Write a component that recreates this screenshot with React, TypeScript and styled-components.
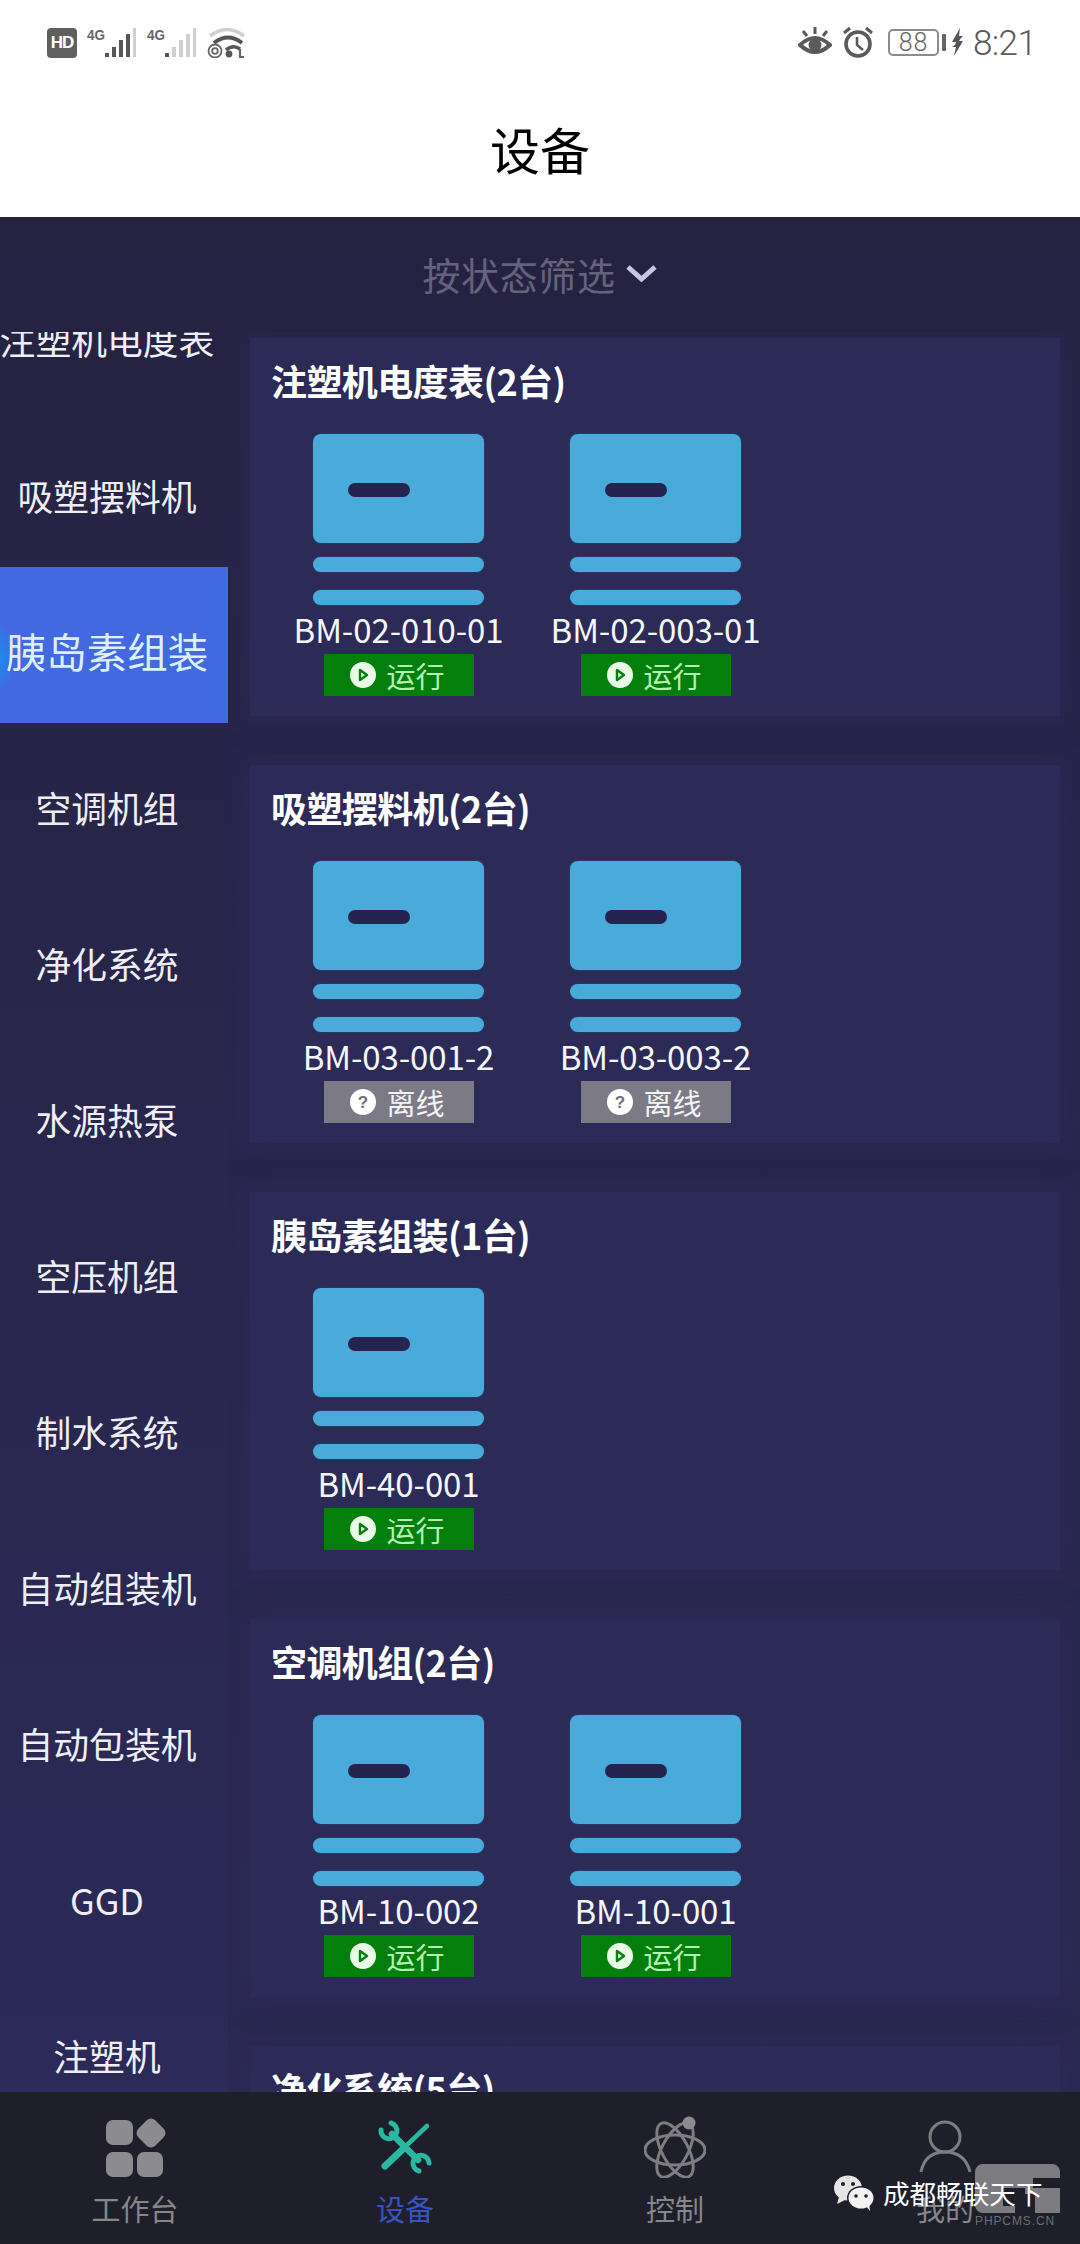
import React from "react";
import styled, { createGlobalStyle } from "styled-components";

const Global = createGlobalStyle`
  html, body { margin: 0; padding: 0; background: #fff; }
  * { box-sizing: border-box; }
`;

const CJK = `"Noto Sans CJK SC", "Noto Sans", sans-serif`;

const Page = styled.div`
  width: 1080px;
  height: 2244px;
  display: flex;
  flex-direction: column;
  overflow: hidden;
  font-family: ${CJK};
`;
const Header = styled.header`
  height: 217px;
  flex: none;
  background: #fff;
  display: flex;
  flex-direction: column;
`;
const StatusBar = styled.div`
  height: 80px;
  padding: 27px 47px 0 47px;
  display: flex;
  justify-content: space-between;
  align-items: flex-start;
`;
const StatusGroup = styled.div`
  display: flex;
  align-items: flex-start;
  gap: 10px;
`;
const HdBadge = styled.div`
  width: 30px;
  height: 30px;
  margin-top: 1px;
  border-radius: 4px;
  background: #5f5f5f;
  color: #fff;
  font: 700 17px/30px "Liberation Sans", sans-serif;
  text-align: center;
  letter-spacing: -1px;
`;
const Battery = styled.div`
  width: 51px;
  height: 27px;
  margin: 2px 0 0 4px;
  border: 2px solid #8c8c8c;
  border-radius: 5px;
  color: #666;
  font: 300 25px/23px Roboto, sans-serif;
  text-align: center;
  letter-spacing: 1px;
`;
const BatteryTip = styled.div`
  width: 4px;
  height: 17px;
  margin: 7px 0 0 -7px;
  background: #666;
  border-radius: 1px;
`;
const Clock = styled.div`
  font: 300 35px/30px Roboto, sans-serif;
  color: #5a5a5a;
  margin: 2px 0 0 -1px;
  letter-spacing: -0.6px;
  width: 60px;
  white-space: nowrap;
`;
const TitleBar = styled.h1`
  flex: 1;
  margin: 0;
  padding-bottom: 2px;
  display: flex;
  align-items: center;
  justify-content: center;
  font-size: 50px;
  font-weight: 400;
  color: #000;
  line-height: 1;
`;

const Body = styled.main`
  flex: 1;
  min-height: 0;
  display: flex;
  flex-direction: column;
  background: linear-gradient(#252240, #27254b 30%, #2a2952);
`;
const FilterBar = styled.div`
  height: 115px;
  flex: none;
  padding-bottom: 3px;
  display: flex;
  align-items: center;
  justify-content: center;
  gap: 9px;
  color: #64637a;
  font-size: 38px;
  letter-spacing: 0.6px;
`;
const Columns = styled.div`
  flex: 1;
  min-height: 0;
  display: flex;
  overflow: hidden;
`;
const Sidebar = styled.nav`
  width: 228px;
  flex: none;
  background: linear-gradient(#262342, #2b2a58);
  overflow: hidden;
`;
const SideList = styled.div`
  margin-top: -77px;
  display: flex;
  flex-direction: column;
`;
const SideItem = styled.div<{ $active?: boolean }>`
  height: 156px;
  flex: none;
  display: flex;
  align-items: center;
  justify-content: center;
  padding: 11px 14px 0 0;
  white-space: nowrap;
  color: ${(p) => (p.$active ? "#dcf0ff" : "#eeeef4")};
  font-size: ${(p) => (p.$active ? "40.5px" : "35.8px")};
  background: ${(p) =>
    p.$active
      ? "radial-gradient(ellipse 14px 36px at 0 58%, #1c8cf0, transparent), #4269e0"
      : "transparent"};
`;
const Main = styled.section`
  flex: 1;
  min-width: 0;
  overflow: hidden;
  padding: 6px 20px 0 22px;
`;
const Card = styled.article`
  height: 378px;
  margin-bottom: 49px;
  padding: 22px 0 0 20px;
  background: #2c2a56;
  box-shadow: 0 0 22px 6px rgba(44, 42, 86, 0.7);
`;
const CardTitle = styled.h2`
  margin: 0 0 0 1px;
  color: #fff;
  font-size: 36px;
  line-height: 40px;
  font-weight: 700;
  letter-spacing: -0.6px;
`;
const DeviceRow = styled.div`
  display: flex;
  margin-top: 34px;
`;
const Device = styled.div`
  width: 257px;
  display: flex;
  flex-direction: column;
  align-items: center;
`;
const Screen = styled.div`
  width: 171px;
  height: 109px;
  display: flex;
  padding: 49px 0 0 35px;
  border-radius: 8px;
  background: #4aabda;
  box-shadow: 0 0 3px #1f4c85;
`;
const Slot = styled.div`
  width: 62px;
  height: 14px;
  border-radius: 7px;
  background: #252451;
`;
const Rail = styled.div`
  width: 171px;
  height: 15px;
  margin-top: 14px;
  border-radius: 8px;
  background: #4aabda;
  box-shadow: 0 0 3px #1f4c85;
  & + & {
    margin-top: 18px;
  }
`;
const DeviceName = styled.div`
  margin-top: 4px;
  height: 41px;
  color: #f4f6fa;
  font-size: 33px;
  line-height: 40px;
  letter-spacing: -0.1px;
  white-space: nowrap;
`;
const Badge = styled.div<{ $online: boolean }>`
  width: 150px;
  height: 42px;
  margin-top: 4px;
  display: flex;
  align-items: center;
  justify-content: center;
  gap: 10px;
  padding-right: 2px;
  font-size: 29px;
  line-height: 42px;
  background: ${(p) => (p.$online ? "#047f0c" : "#7b7a86")};
  color: ${(p) => (p.$online ? "#b4f2b4" : "#f4f4f4")};
`;
const TabBar = styled.footer`
  position: relative;
  height: 152px;
  flex: none;
  background: #1e1f2a;
  display: grid;
  grid-template-columns: repeat(4, 1fr);
`;
const Tab = styled.div`
  display: flex;
  flex-direction: column;
  align-items: center;
  padding-top: 24px;
`;
const TabLabel = styled.span<{ $active?: boolean }>`
  margin-top: 11px;
  font-size: 29px;
  line-height: 38px;
  color: ${(p) => (p.$active ? "#3756bd" : "#87878a")};
`;
const Watermark = styled.div`
  position: absolute;
  left: 833px;
  top: 83px;
  display: flex;
  align-items: center;
  gap: 8px;
  color: #fff;
  font-size: 26.6px;
  line-height: 36px;
  white-space: nowrap;
`;
const WatermarkLogo = styled.svg`
  position: absolute;
  left: 975px;
  top: 72px;
`;
const WatermarkSite = styled.div`
  position: absolute;
  left: 975px;
  top: 122px;
  color: #6e6e72;
  font: 400 12px/14px "Liberation Sans", sans-serif;
  letter-spacing: 0.9px;
`;
const BackLayer = styled.svg`
  display: block;
  flex: none;
`;

const Signal = ({ bars }: { bars: number }) => (
  <BackLayer width="50" height="32" viewBox="0 0 50 32">
    <text x="0" y="13" fontFamily="'Liberation Sans', sans-serif" fontSize="14" fontWeight="700" fill="#666" textLength="18" lengthAdjust="spacingAndGlyphs">
      4G
    </text>
    {[
      [18, 26, 4],
      [25, 20, 4],
      [32, 13, 4],
      [39, 7, 4],
      [46, 1, 3],
    ].map(([x, y, w], i) => (
      <rect key={x} x={x} y={y} width={w} height={30 - y} fill={i < bars ? "#555" : "#cfcfcf"} />
    ))}
  </BackLayer>
);

const Wifi = () => (
  <BackLayer width="40" height="31" viewBox="0 0 40 31" fill="none">
    <path d="M3 9Q20-4 37 9" stroke="#cfcfcf" strokeWidth="3.5" />
    <path d="M7 16Q21 5 35 16" stroke="#555" strokeWidth="4" />
    <path d="M19 23Q26 17 33 22" stroke="#555" strokeWidth="3.5" />
    <circle cx="8" cy="24" r="6.5" stroke="#666" strokeWidth="1.8" />
    <circle cx="8" cy="24" r="2.8" stroke="#666" strokeWidth="1.8" />
    <circle cx="22" cy="27" r="3.4" fill="#555" />
    <path d="M33 22v8h4" stroke="#666" strokeWidth="2.2" />
  </BackLayer>
);

const Eye = () => (
  <BackLayer width="34" height="30" viewBox="0 0 34 30" fill="none">
    <path d="M2 18Q17 4 32 18Q17 32 2 18Z" stroke="#5a5a5a" strokeWidth="4" />
    <circle cx="17" cy="18" r="6.5" fill="#5a5a5a" />
    <path d="M17 0v7M5 4l4 5M29 4l-4 5" stroke="#5a5a5a" strokeWidth="3" />
  </BackLayer>
);

const Alarm = () => (
  <BackLayer width="32" height="31" viewBox="0 0 32 31" fill="none">
    <circle cx="16" cy="17" r="12" stroke="#5a5a5a" strokeWidth="3.6" />
    <path d="M15 10v8l6 5" stroke="#5a5a5a" strokeWidth="2.6" />
    <path d="M2 6l6-5M30 6l-6-5" stroke="#5a5a5a" strokeWidth="3.2" />
  </BackLayer>
);

const Bolt = () => (
  <BackLayer width="13" height="30" viewBox="0 0 13 30" style={{ marginLeft: -5 }}>
    <path d="M9 1L1 15h4l-1 3 -3 2h4L3 29 12 14H8l2-3 2-2H8z" fill="#555" />
  </BackLayer>
);

const Chevron = () => (
  <svg width="33" height="18" viewBox="0 0 33 18" fill="none">
    <path d="M3 3l13.5 12L30 3" stroke="#c9c6e0" strokeWidth="5" />
  </svg>
);

const StatusIcon = ({ online }: { online: boolean }) => (
  <svg width="26" height="26" viewBox="0 0 26 26">
    <circle cx="13" cy="13" r="13" fill={online ? "#eafbe8" : "#fff"} />
    {online ? (
      <path d="M10 8l7 5-7 5z" fill="none" stroke="#047f0c" strokeWidth="2.4" strokeLinejoin="round" />
    ) : (
      <text x="13" y="19" textAnchor="middle" fontFamily="'Liberation Sans', sans-serif" fontWeight="700" fontSize="17" fill="#6e6d78">
        ?
      </text>
    )}
  </svg>
);

const GridIcon = () => (
  <BackLayer width="62" height="62" viewBox="0 0 62 62" fill="#8c8c90">
    <rect x="2" y="4" width="27" height="25" rx="7" />
    <rect x="2" y="36" width="27" height="25" rx="7" />
    <rect x="33" y="36" width="26" height="25" rx="7" />
    <rect x="35" y="5" width="24" height="24" rx="6" transform="rotate(45 47 17)" />
  </BackLayer>
);

const ToolsIcon = () => (
  <BackLayer width="62" height="62" viewBox="0 0 62 62" fill="none" stroke="#2bb8a2" strokeLinecap="round">
    <g transform="translate(6 6)">
      <path d="M47 4L28 22" strokeWidth="4.5" />
      <path d="M23 27L5 44" strokeWidth="7" />
      <path d="M12 12L38 38" strokeWidth="6.5" />
      <path d="M1 8A8 8 0 1 0 11 1" strokeWidth="5" />
      <path d="M49 41A8 8 0 1 0 39 49" strokeWidth="5" />
    </g>
  </BackLayer>
);

const AtomIcon = () => (
  <BackLayer width="62" height="62" viewBox="0 0 62 62" fill="none" stroke="#7e7e82" strokeWidth="3">
    <ellipse cx="31" cy="34" rx="30" ry="15" />
    <ellipse cx="31" cy="34" rx="30" ry="13" transform="rotate(62 31 34)" />
    <ellipse cx="31" cy="34" rx="30" ry="13" transform="rotate(-62 31 34)" />
    <circle cx="45" cy="7" r="6.5" fill="#8c8c90" stroke="none" />
  </BackLayer>
);

const UserIcon = () => (
  <BackLayer width="62" height="62" viewBox="0 0 62 62" fill="none" stroke="#7e7e82" strokeWidth="3">
    <circle cx="31" cy="21" r="15" />
    <path d="M7 56Q11 36 31 36Q51 36 56 56" />
  </BackLayer>
);

const WeChat = () => (
  <svg width="42" height="36" viewBox="0 0 42 36">
    <ellipse cx="15" cy="13" rx="14" ry="12.5" fill="#e6e6e6" />
    <path d="M6 22l-2 7 8-4z" fill="#e6e6e6" />
    <circle cx="10" cy="9" r="2" fill="#1e1f2a" />
    <circle cx="20" cy="9" r="2" fill="#1e1f2a" />
    <ellipse cx="28" cy="23" rx="14" ry="12" fill="#1e1f2a" />
    <ellipse cx="28" cy="23" rx="12.5" ry="10.5" fill="#f2f2f2" />
    <path d="M33 31l4 5-1-8z" fill="#f2f2f2" />
    <circle cx="23" cy="21" r="1.8" fill="#1e1f2a" />
    <circle cx="33" cy="21" r="1.8" fill="#1e1f2a" />
  </svg>
);

const groups = [
  { name: "注塑机电度表(2台)", devices: [["BM-02-010-01", true], ["BM-02-003-01", true]] },
  { name: "吸塑摆料机(2台)", devices: [["BM-03-001-2", false], ["BM-03-003-2", false]] },
  { name: "胰岛素组装(1台)", devices: [["BM-40-001", true]] },
  { name: "空调机组(2台)", devices: [["BM-10-002", true], ["BM-10-001", true]] },
  { name: "净化系统(5台)", devices: [] },
] as { name: string; devices: [string, boolean][] }[];

const side = ["注塑机电度表", "吸塑摆料机", "胰岛素组装", "空调机组", "净化系统", "水源热泵", "空压机组", "制水系统", "自动组装机", "自动包装机", "GGD", "注塑机"];

export default function App() {
  return (
    <Page>
      <Global />
      <Header>
        <StatusBar>
          <StatusGroup>
            <HdBadge>HD</HdBadge>
            <Signal bars={4} />
            <Signal bars={1} />
            <Wifi />
          </StatusGroup>
          <StatusGroup>
            <Eye />
            <Alarm />
            <Battery>88</Battery>
            <BatteryTip />
            <Bolt />
            <Clock>8:21</Clock>
          </StatusGroup>
        </StatusBar>
        <TitleBar>设备</TitleBar>
      </Header>
      <Body>
        <FilterBar>
          按状态筛选
          <Chevron />
        </FilterBar>
        <Columns>
          <Sidebar>
            <SideList>
              {side.map((s, i) => (
                <SideItem key={s} $active={i === 2}>
                  {s}
                </SideItem>
              ))}
            </SideList>
          </Sidebar>
          <Main>
            {groups.map((g) => (
              <Card key={g.name}>
                <CardTitle>{g.name}</CardTitle>
                <DeviceRow>
                  {g.devices.map(([name, online]) => (
                    <Device key={name}>
                      <Screen>
                        <Slot />
                      </Screen>
                      <Rail />
                      <Rail />
                      <DeviceName>{name}</DeviceName>
                      <Badge $online={online}>
                        <StatusIcon online={online} />
                        {online ? "运行" : "离线"}
                      </Badge>
                    </Device>
                  ))}
                </DeviceRow>
              </Card>
            ))}
          </Main>
        </Columns>
      </Body>
      <TabBar>
        <Tab>
          <GridIcon />
          <TabLabel>工作台</TabLabel>
        </Tab>
        <Tab>
          <ToolsIcon />
          <TabLabel $active>设备</TabLabel>
        </Tab>
        <Tab>
          <AtomIcon />
          <TabLabel>控制</TabLabel>
        </Tab>
        <Tab>
          <UserIcon />
          <TabLabel>我的</TabLabel>
        </Tab>
        <WatermarkLogo width="85" height="49" viewBox="0 0 85 49">
          <path d="M8 0H77a8 8 0 0 1 8 8V49H60V30H40V49H8a8 8 0 0 1-8-8V8a8 8 0 0 1 8-8Z" fill="#7c7c80" />
          <path d="M58 14H85V24H58Z" fill="#1e1f2a" />
          <path d="M28 24H50V42H28Z" fill="#1e1f2a" />
        </WatermarkLogo>
        <WatermarkSite>PHPCMS.CN</WatermarkSite>
        <Watermark>
          <WeChat />
          成都畅联天下
        </Watermark>
      </TabBar>
    </Page>
  );
}
